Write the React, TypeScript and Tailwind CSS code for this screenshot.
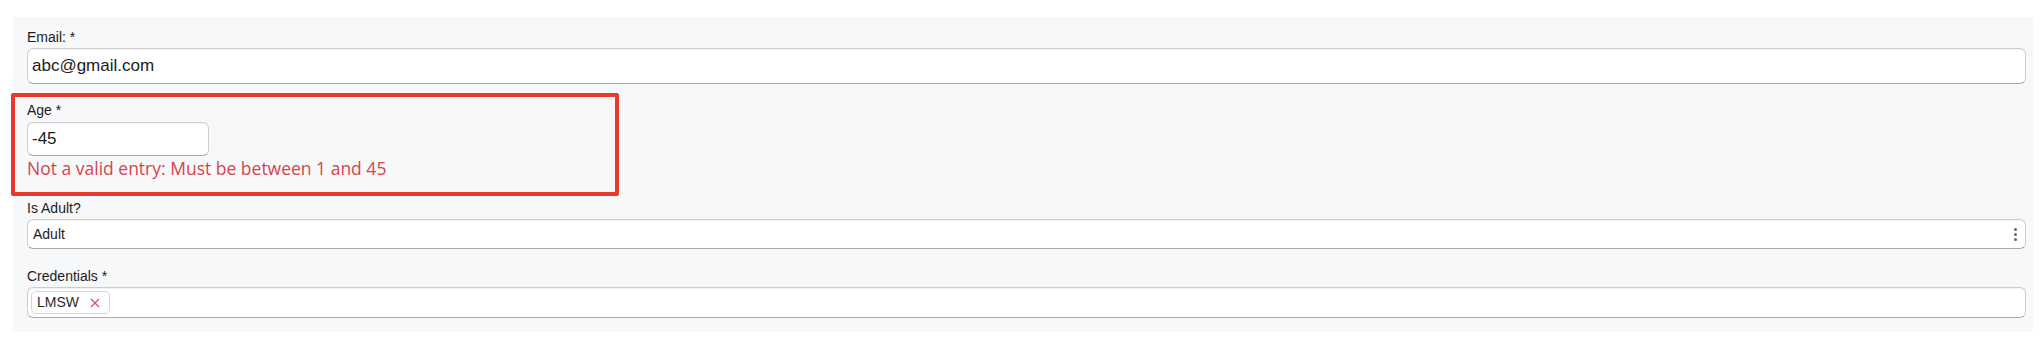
import { useState } from 'react';

const inputBox =
  'bg-white border border-[#cdcdcd] border-b-[#a9a9a9] rounded-[6px] shadow-[inset_0_1px_1px_rgba(0,0,0,0.06)]';

function Label({ text }: { text: string }) {
  return <div className="text-[14px] leading-[18px] text-[#1c1c1c]">{text}</div>;
}

export default function App() {
  const [email, setEmail] = useState('abc@gmail.com');
  const [age, setAge] = useState('-45');
  const [creds, setCreds] = useState(['LMSW']);

  return (
    <div className="w-[2044px] h-[350px] bg-white pt-[17px] pl-[13px] font-['Liberation_Sans',Arial,sans-serif]">
      <div className="w-[2020px] bg-[#f7f8fa] pt-[11px] pb-[14px] pl-[14px] pr-[7px]">
        <Label text="Email: *" />
        <input
          value={email}
          onChange={(e) => setEmail(e.target.value)}
          className={`${inputBox} mt-[2px] block w-full h-[36px] pl-[4px] text-[17px] text-[#1c1c1c] outline-none`}
        />

        {/* highlighted field */}
        <div className="mt-[9px] -ml-[16px] w-[608px] border-4 border-[#e8392f] rounded-[2px] pt-[4px] pb-[14px] pl-[12px]">
          <Label text="Age *" />
          <input
            value={age}
            onChange={(e) => setAge(e.target.value)}
            className={`${inputBox} mt-[3px] block w-[182px] h-[34px] pl-[4px] text-[17px] text-[#1c1c1c] outline-none`}
          />
          <div className="mt-[2px] font-['Open_Sans',sans-serif] text-[17.5px] leading-[20px] text-[#d8434e]">
            Not a valid entry: Must be between 1 and 45
          </div>
        </div>

        <div className="mt-[3px]">
          <Label text="Is Adult?" />
        </div>
        <div className={`${inputBox} mt-[2px] h-[30px] flex items-center justify-between pl-[5px] pr-[8px]`}>
          <span className="text-[14px] text-[#1c1c1c]">Adult</span>
          <div className="flex flex-col gap-[2px]">
            <span className="w-[3px] h-[3px] rounded-full bg-[#666]" />
            <span className="w-[3px] h-[3px] rounded-full bg-[#666]" />
            <span className="w-[3px] h-[3px] rounded-full bg-[#666]" />
          </div>
        </div>

        <div className="mt-[18px]">
          <Label text="Credentials *" />
        </div>
        <div className={`${inputBox} mt-[2px] h-[31px] flex items-center pl-[3px] gap-1`}>
          {creds.map((c) => (
            <span
              key={c}
              className="h-[23px] w-[79px] flex items-center pl-[5px] bg-white border border-[#d6d6d6] rounded-[5px] text-[14px] text-[#2a2a2a]"
            >
              {c}
              <button
                onClick={() => setCreds(creds.filter((x) => x !== c))}
                className="ml-[11px] text-[#e0525e]"
              >
                <svg width="10" height="10" viewBox="0 0 10 10" stroke="currentColor" strokeWidth="1.3">
                  <path d="M1 1L9 9M9 1L1 9" />
                </svg>
              </button>
            </span>
          ))}
        </div>
      </div>
    </div>
  );
}
